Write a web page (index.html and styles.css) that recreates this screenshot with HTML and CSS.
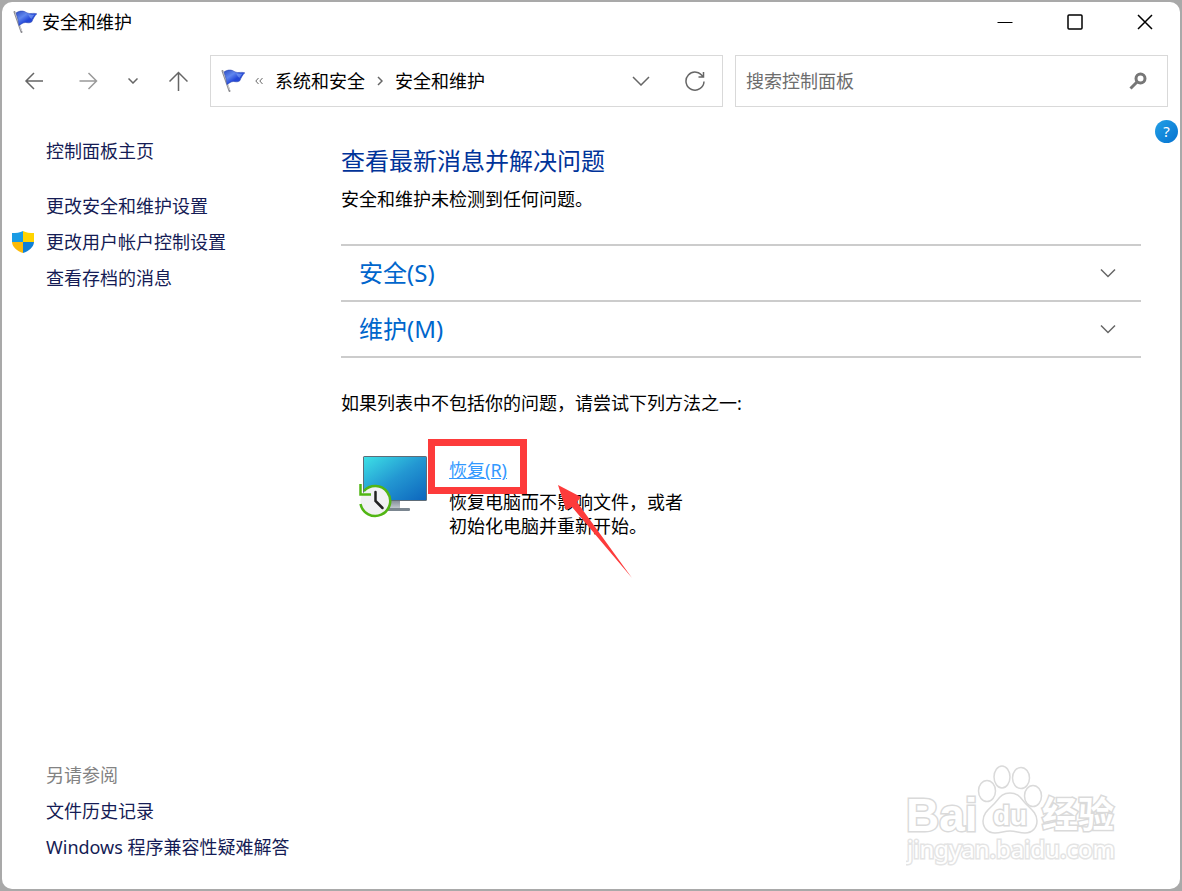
FILE: index.html
```html
<!DOCTYPE html>
<html lang="zh-CN">
<head>
    <meta charset="UTF-8">
    <meta name="viewport" content="width=device-width, initial-scale=1.0">
    <title>安全和维护</title>
    <link rel="stylesheet" href="styles.css">
</head>
<body>
    <svg width="0" height="0" class="defs" aria-hidden="true">
        <defs>
            <linearGradient id="flag-fill" x1="0" y1="0" x2="1" y2="1">
                <stop offset="0" stop-color="#2c4bc0"/>
                <stop offset="0.35" stop-color="#5f86ee"/>
                <stop offset="0.6" stop-color="#2347d8"/>
                <stop offset="1" stop-color="#2a49cf"/>
            </linearGradient>
            <symbol id="flag" viewBox="0 0 24 24">
                <path d="M1.500 2 8.500 22" stroke="#8d8d92" stroke-width="2" stroke-linecap="round" fill="none"/>
                <path d="M2.200 2.500 8.600 21" stroke="#dedee2" stroke-width="0.8" fill="none"/>
                <path d="M3 3C6 1 8.500.6 11.500 1.500c2.500 1.500 4 2.200 6.500 2 2-.1 4-.3 5.800.3-2 2-3.600 4.500-5 8-2.500 1.700-4.300.7-6.300.7-2.500 0-4 1.500-6.500 3C5.500 11 4.500 7 3 3z" fill="url(#flag-fill)" stroke="#2d48b4" stroke-width="0.6"/>
                <path d="M15 4.500c2.500.6 4.500.5 6.500.2-1.300 1.300-2 2.500-2.800 4-1.700-.2-2.500-2.500-3.700-4.200z" fill="#84a6f5" opacity=".6"/>
            </symbol>
        </defs>
    </svg>

    <div class="window">
        <header class="titlebar">
            <svg class="flag" aria-hidden="true"><use href="#flag"/></svg>
            <span class="window-title">安全和维护</span>
            <div class="window-buttons">
                <button aria-label="最小化"><svg width="16" height="16" viewBox="0 0 16 16"><path class="thin" d="M0.500 8.500h15"/></svg></button>
                <button aria-label="最大化"><svg width="16" height="16" viewBox="0 0 16 16"><rect x="1" y="1" width="14" height="14" rx="1"/></svg></button>
                <button aria-label="关闭"><svg width="16" height="16" viewBox="0 0 16 16"><path d="M1 1l14 14M15 1 1 15"/></svg></button>
            </div>
        </header>

        <nav class="toolbar">
            <div class="nav-buttons">
                <button aria-label="后退"><svg width="20" height="20" viewBox="0 0 20 20"><path d="M19 10H2M10 2l-8 8 8 8"/></svg></button>
                <button aria-label="前进" disabled><svg width="20" height="20" viewBox="0 0 20 20"><path d="M1.500 10h17M10.500 2l8 8-8 8"/></svg></button>
                <button class="recent" aria-label="最近浏览的位置"><svg width="10" height="6" viewBox="0 0 10 6"><path d="M.5.5 5 5 9.500.5"/></svg></button>
                <button class="up" aria-label="上移"><svg width="20" height="20" viewBox="0 0 20 20"><path d="M10.500 20V1.500M1.500 10.500l9-9 9 9"/></svg></button>
            </div>
            <div class="address">
                <svg class="flag" aria-hidden="true"><use href="#flag"/></svg>
                <svg class="crumb-more" width="8" height="8" viewBox="0 0 8 8" aria-hidden="true"><path d="M3.500 1 .8 4l2.700 3M7.500 1 4.800 4l2.700 3"/></svg>
                <a href="#">系统和安全</a>
                <svg class="crumb-sep" width="6" height="10" viewBox="0 0 6 10" aria-hidden="true"><path d="M1 1l4 4-4 4"/></svg>
                <a href="#">安全和维护</a>
                <div class="address-buttons">
                    <button aria-label="以前的位置"><svg width="18" height="10" viewBox="0 0 18 10"><path d="M1 1l8 8 8-8"/></svg></button>
                    <button aria-label="刷新"><svg width="20" height="20" viewBox="0 0 20 20"><path d="M18 6A9 9 0 1 0 19 10.500M18.500 1v5H13.500"/></svg></button>
                </div>
            </div>
            <label class="search">
                <input type="text" placeholder="搜索控制面板" aria-label="搜索控制面板">
                <svg width="18" height="18" viewBox="0 0 18 18" aria-hidden="true"><circle cx="11.500" cy="6.500" r="4.500"/><path d="M8 10l-6.500 6.500"/></svg>
            </label>
        </nav>

        <div class="content">
            <aside class="sidebar">
                <a class="home" href="#">控制面板主页</a>
                <a href="#">更改安全和维护设置</a>
                <a class="with-shield" href="#">
                    <svg width="22" height="22" viewBox="0 0 22 22" aria-hidden="true">
                        <path d="M11 0C8 1.800 4 2 0 2v9h11z" fill="#1a9be4"/>
                        <path d="M11 0c3 1.800 7 2 11 2v9H11z" fill="#ffd400"/>
                        <path d="M0 11c.5 5.500 5 9 11 11V11z" fill="#fdba08"/>
                        <path d="M22 11c-.5 5.500-5 9-11 11V11z" fill="#0f7fd6"/>
                    </svg>
                    更改用户帐户控制设置
                </a>
                <a href="#">查看存档的消息</a>
                <div class="see-also">
                    <span>另请参阅</span>
                    <a href="#">文件历史记录</a>
                    <a href="#">Windows 程序兼容性疑难解答</a>
                </div>
            </aside>

            <main class="main">
                <h1>查看最新消息并解决问题</h1>
                <p>安全和维护未检测到任何问题。</p>

                <div class="groups">
                    <button class="group">安全(S)<svg width="16" height="10" viewBox="0 0 16 10" aria-hidden="true"><path d="M1 1.500l7 7 7-7"/></svg></button>
                    <button class="group">维护(M)<svg width="16" height="10" viewBox="0 0 16 10" aria-hidden="true"><path d="M1 1.500l7 7 7-7"/></svg></button>
                </div>

                <p>如果列表中不包括你的问题，请尝试下列方法之一:</p>

                <div class="recovery">
                    <svg width="68" height="64" viewBox="0 0 68 64" aria-hidden="true">
                        <defs>
                            <linearGradient id="screen" x1="0" y1="0" x2="1" y2="1">
                                <stop offset="0" stop-color="#3de0e6"/>
                                <stop offset="0.5" stop-color="#2397d2"/>
                                <stop offset="1" stop-color="#0d66bd"/>
                            </linearGradient>
                            <linearGradient id="stand" x1="0" y1="0" x2="0" y2="1">
                                <stop offset="0" stop-color="#7f8a95"/>
                                <stop offset="1" stop-color="#c8ced4"/>
                            </linearGradient>
                        </defs>
                        <rect x="31" y="45" width="10" height="9" fill="url(#stand)"/>
                        <rect x="22" y="53" width="29" height="3" rx="1" fill="#7b8690"/>
                        <rect x="4" y="1" width="64" height="45" rx="1.500" fill="#5e6c78"/>
                        <rect x="5" y="2" width="62" height="43" fill="url(#screen)"/>
                        <circle cx="16.500" cy="46.500" r="15" fill="#f1f1f3"/>
                        <path d="M5 36A15 15 0 1 1 1.500 49" fill="none" stroke="#52b614" stroke-width="2.500"/>
                        <path d="M1.500 29v10.500H12" fill="none" stroke="#52b614" stroke-width="2.500"/>
                        <path d="M16.500 37v9l7 7" fill="none" stroke="#222" stroke-width="2.500" stroke-linecap="round"/>
                    </svg>
                    <div class="recovery-text">
                        <a href="#">恢复(R)</a>
                        <p>恢复电脑而不影响文件，或者初始化电脑并重新开始。</p>
                    </div>
                    <div class="marker"></div>
                    <svg class="arrow" width="76" height="94" viewBox="0 0 76 94" aria-hidden="true">
                        <path d="M0 0l23 12-4 5 55 76L14 22l-6 3z" fill="#fd3b3b"/>
                    </svg>
                </div>
            </main>

            <button class="help" aria-label="帮助">?</button>
        </div>

        <div class="watermark" aria-hidden="true">
            <svg width="216" height="104" viewBox="0 0 216 104">
                <g class="mark">
                    <text class="brand" x="0" y="66">Bai</text>
                    <ellipse cx="81" cy="26" rx="8.500" ry="10.500"/>
                    <ellipse cx="96" cy="12" rx="8" ry="11"/>
                    <ellipse cx="115" cy="13" rx="8.500" ry="10.500"/>
                    <ellipse cx="127" cy="31" rx="8.500" ry="10.500"/>
                    <path d="M104 28c-9 0-11 6-16 11s-11 9-11 17c0 7 5 12 12 12 6 0 9-2 15-2s9 2 15 2c7 0 12-5 12-12 0-8-6-12-11-17s-7-11-16-11z"/>
                    <text class="du" x="87" y="60">du</text>
                    <text class="exp" x="136" y="63">经验</text>
                    <text class="url" x="1" y="93">jingyan.baidu.com</text>
                </g>
            </svg>
        </div>
    </div>
</body>
</html>
```
FILE: styles.css
```css
* {
    box-sizing: border-box;
}
body {
    margin: 0;
    padding: 2px;
    min-height: 100vh;
    display: flex;
    background-color: #a9a9a9;
    font-family: "Noto Sans", "Noto Sans CJK SC", sans-serif;
    font-size: 18px;
    line-height: 24px;
    color: #000;
}
button {
    padding: 0;
    border: none;
    background: none;
    font: inherit;
    color: inherit;
    cursor: pointer;
}
a {
    color: inherit;
    text-decoration: none;
}
p {
    margin: 0;
}
.defs {
    position: absolute;
}
.window {
    position: relative;
    flex: 1;
    display: flex;
    flex-direction: column;
    background: white;
    border-radius: 10px;
}
.flag {
    width: 24px;
    height: 24px;
}

/* title bar */
.titlebar {
    display: flex;
    align-items: center;
    height: 40px;
    padding-left: 11px;
    gap: 5px;
}
.window-buttons {
    display: flex;
    margin-left: auto;
}
.window-buttons button {
    display: flex;
    justify-content: center;
    align-items: center;
    width: 70px;
    height: 40px;
}
.window-buttons svg {
    fill: none;
    stroke: #000;
    stroke-width: 1.5;
}
.window-buttons .thin {
    stroke-width: 1;
}

/* navigation row */
.toolbar {
    display: grid;
    grid-template-columns: 208px 513fr 12px 433fr;
    padding: 13px 12px 0 0;
}
.nav-buttons {
    display: flex;
    align-items: center;
    padding-left: 22px;
    gap: 34px;
}
.nav-buttons button,
.address-buttons button {
    display: flex;
}
.nav-buttons .recent {
    margin: 0 -4px;
}
.toolbar svg {
    fill: none;
    stroke: #666;
    stroke-width: 1.5;
}
.toolbar button:disabled svg {
    stroke: #999;
}
.toolbar .flag {
    stroke: none;
}
.address,
.search {
    display: flex;
    align-items: center;
    height: 52px;
    border: 1px solid #d9d9d9;
}
.address {
    padding: 0 17px 0 10px;
}
.crumb-more {
    margin: 0 12px 0 10px;
}
.toolbar .crumb-more {
    stroke-width: 1;
}
.crumb-sep {
    margin: 0 12px;
}
.address-buttons {
    display: flex;
    align-items: center;
    gap: 35px;
    margin-left: auto;
}
.search {
    grid-column: 4;
    padding: 0 20px 0 10px;
}
.search input {
    flex: 1;
    min-width: 0;
    padding: 0;
    border: none;
    outline: none;
    font: inherit;
}
.search input::placeholder {
    color: #6d6d6d;
    opacity: 1;
}
.search svg {
    stroke: #777;
    stroke-width: 3;
}

/* page body */
.content {
    position: relative;
    flex: 1;
    display: flex;
}
.sidebar {
    display: flex;
    flex-direction: column;
    width: 339px;
    padding: 26px 0 24px 44px;
    line-height: 36px;
    color: #151c55;
}
.home {
    margin-bottom: 19px;
}
.with-shield {
    display: flex;
    align-items: center;
    gap: 12px;
    margin-left: -34px;
}
.see-also {
    display: flex;
    flex-direction: column;
    margin-top: auto;
}
.see-also span {
    color: #838383;
}
.main {
    flex: 1;
    padding: 36px 39px 0 0;
}
h1 {
    margin: 0 0 8px;
    font-size: 24px;
    font-weight: normal;
    line-height: 36px;
    color: #003399;
}
.groups {
    margin: 33px 0;
    border-top: 2px solid #ccc;
}
.group {
    display: flex;
    justify-content: space-between;
    align-items: center;
    width: 100%;
    height: 56px;
    padding: 0 25px 0 18px;
    border-bottom: 2px solid #ccc;
    font-size: 24px;
    color: #0066cc;
}
.group svg {
    fill: none;
    stroke: #666;
    stroke-width: 1.5;
}
.recovery {
    position: relative;
    display: flex;
    gap: 22px;
    margin-top: 40px;
    padding-left: 18px;
}
.recovery-text {
    display: flex;
    flex-direction: column;
    align-items: flex-start;
    gap: 8px;
    width: 236px;
    padding-top: 3px;
}
.recovery-text a {
    color: #3399ff;
    text-decoration: underline;
}
.marker {
    position: absolute;
    left: 87px;
    top: -16px;
    width: 99px;
    height: 55px;
    border: 7px solid #fd3b3b;
}
.arrow {
    position: absolute;
    left: 217px;
    top: 30px;
}
.help {
    position: absolute;
    top: 13px;
    right: 2px;
    width: 23px;
    height: 23px;
    border-radius: 50%;
    background: linear-gradient(135deg, #23a0e6, #0572d0);
    color: white;
    font-size: 15px;
    line-height: 23px;
}

/* logo in the lower right corner */
.watermark {
    position: absolute;
    right: 58px;
    bottom: 20px;
}
.watermark svg {
    display: block;
}
.mark {
    fill: white;
    stroke: #dadada;
    stroke-width: 1.5;
}
.mark text {
    paint-order: stroke;
    stroke-width: 3;
}
.brand {
    font: bold 46px "Liberation Sans", sans-serif;
}
.du {
    font: bold 28px "Liberation Sans", sans-serif;
}
.exp {
    font: bold 36px "Noto Sans CJK SC", sans-serif;
}
.url {
    font: 24px "Noto Sans", sans-serif;
    stroke: #e4e4e4;
}
```
